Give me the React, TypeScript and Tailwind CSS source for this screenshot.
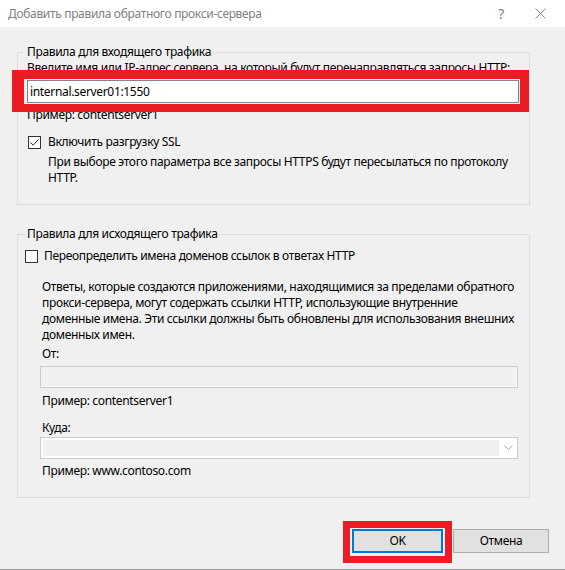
import React from "react";

const Checkbox = ({ checked }: { checked?: boolean }) => (
  <span className="flex h-[13px] w-[13px] shrink-0 items-center justify-center border border-[#333333] bg-white">
    {checked && (
      <svg width="11" height="11" viewBox="0 0 11 11">
        <path d="M1.5 5.5 L4.2 8.2 L9.5 2.2" fill="none" stroke="#333333" strokeWidth="1" />
      </svg>
    )}
  </span>
);

const Hint = ({ text, className = "" }: { text: string; className?: string }) => (
  <p className={`whitespace-nowrap leading-4 ${className}`}>{text}</p>
);

export default function App() {
  return (
    <div className="relative h-[570px] w-[565px] overflow-hidden border-b border-[#a0a0a0] bg-[#f0f0f0] font-['Noto_Sans','Liberation_Sans',sans-serif] text-[12px] leading-4 tracking-[-0.33px] text-black">
      {/* title bar */}
      <div className="flex h-[27px] items-center bg-white pl-2">
        <span className="text-[#808080]">Добавить правила обратного прокси-сервера</span>
        <span className="ml-auto mr-[31px] text-[14px] text-[#808080]">?</span>
        <svg className="mr-[19px]" width="11" height="11" viewBox="0 0 11 11">
          <path d="M0.5 0.5 L10.5 10.5 M10.5 0.5 L0.5 10.5" stroke="#8a8a8a" strokeWidth="1" />
        </svg>
      </div>

      <div className="pl-[17px] pt-[17px]">
        {/* incoming */}
        <fieldset className="w-[513px] min-w-0 border border-[#dcdcdc] pb-[18px] pl-[9px] pr-[10px]">
          <legend className="ml-[-2px] px-[2px] leading-4">Правила для входящего трафика</legend>
          <p className="whitespace-nowrap leading-4">
            Введите имя или IP-адрес сервера, на который будут перенаправляться запросы HTTP:
          </p>
          <div className="mt-1 flex h-[23px] items-center border border-[#7a8896] bg-white pl-[2px]">
            internal.server01:1550
          </div>
          <Hint className="mt-1" text="Пример: contentserver1" />
          <label className="mt-[11px] flex h-4 items-center gap-[7px] pl-[1px]">
            <Checkbox checked />
            <span>Включить разгрузку SSL</span>
          </label>
          <p className="mt-1 whitespace-nowrap pl-[21px] leading-4">
            При выборе этого параметра все запросы HTTPS будут пересылаться по протоколу
            <br />
            HTTP.
          </p>
        </fieldset>

        {/* outgoing */}
        <fieldset className="mt-[21px] w-[513px] min-w-0 border border-[#dcdcdc] pb-[18px] pl-[22px] pr-[11px]">
          <legend className="ml-[-15px] px-[2px] leading-4">Правила для исходящего трафика</legend>
          <label className="ml-[-15px] mt-[6px] flex h-4 items-center gap-[6px]">
            <Checkbox />
            <span>Переопределить имена доменов ссылок в ответах HTTP</span>
          </label>
          <p className="mt-[15px] whitespace-nowrap pl-[2px] leading-4">
            Ответы, которые создаются приложениями, находящимися за пределами обратного
            <br />
            прокси-сервера, могут содержать ссылки HTTP, использующие внутренние
            <br />
            доменные имена. Эти ссылки должны быть обновлены для использования внешних
            <br />
            доменных имен.
          </p>
          <Hint className="mt-[3px] pl-[2px]" text="От:" />
          <div className="mt-1 h-[22px] border border-[#cccccc] bg-[#f0f0f0] shadow-[inset_-1px_-1px_0_#fafafa]" />
          <Hint className="mt-[5px] pl-[2px]" text="Пример: contentserver1" />
          <Hint className="mt-[11px] pl-[2px]" text="Куда:" />
          <div className="mt-[1px] flex h-[22px] border border-[#cccccc] bg-white py-[2px] pl-[2px]">
            <div className="flex-1 bg-[#f0f0f0]" />
            <div className="flex w-[18px] items-center justify-center">
              <svg width="9" height="6" viewBox="0 0 9 6">
                <path d="M0.5 0.5 L4.5 4.5 L8.5 0.5" fill="none" stroke="#a8a8a8" strokeWidth="1" />
              </svg>
            </div>
          </div>
          <Hint className="mt-1 pl-[2px]" text="Пример: www.contoso.com" />
        </fieldset>

        {/* buttons */}
        <div className="mt-[31px] flex justify-end gap-[10px] pr-[16px]">
          <button className="h-[24px] w-[91px] border-2 border-[#0078d7] bg-[#e1e1e1] leading-4">
            OK
          </button>
          <button className="h-[24px] w-[96px] border border-[#adadad] bg-[#e1e1e1] leading-4">
            Отмена
          </button>
        </div>
      </div>

      {/* red highlight annotations */}
      <div className="pointer-events-none absolute left-[12px] top-[70px] h-[42px] w-[517px] border-b-[8px] border-l-[12px] border-r-[9px] border-t-[9px] border-[#ec1c24]" />
      <div className="pointer-events-none absolute left-[343px] top-[521px] h-[42px] w-[109px] border-[7px] border-[#ec1c24]" />
    </div>
  );
}
